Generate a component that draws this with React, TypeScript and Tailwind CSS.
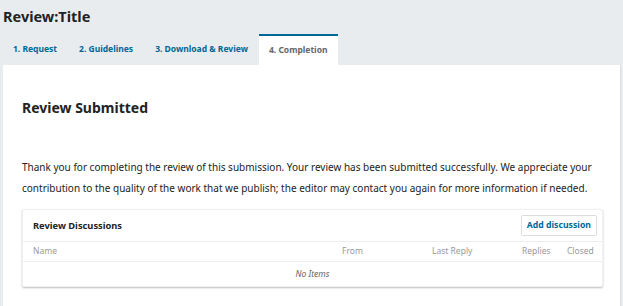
import React from "react";

export default function App() {
  const font = { fontFamily: '"Noto Sans", "Open Sans", sans-serif' };
  return (
    <div className="w-[623px] h-[306px] bg-[#e9ecee] overflow-hidden text-[#222]" style={font}>
      <div className="h-[34px] pl-[3px] pt-[5px]">
        <h1 className="text-[14.5px] leading-[22px] font-bold">Review:Title</h1>
      </div>
      <div className="flex h-[31px] pl-[2px] text-[8.5px] font-bold">
        <div className="px-[11px] flex items-center text-[#006798]">1. Request</div>
        <div className="px-[11px] flex items-center text-[#006798]">2. Guidelines</div>
        <div className="px-[11px] flex items-center text-[#006798]">3. Download &amp; Review</div>
        <div className="px-[10px] flex items-center bg-white border-t-2 border-[#006798] text-[#666]">4. Completion</div>
      </div>
      <div className="ml-[3px] w-[618px] h-[241px] bg-white border-r border-[#dcdfe2] pl-[19px] pr-[17px]">
        <h2 className="pt-[32px] text-[14px] leading-[22px] font-bold">Review Submitted</h2>
        <p className="mt-[38px] text-[10px] leading-[21px] text-[#222]">
          Thank you for completing the review of this submission. Your review has been submitted successfully. We appreciate your contribution to the quality of the work that we publish; the editor may contact you again for more information if needed.
        </p>
        <div className="mt-[10px] w-[581px] rounded-[2px] bg-white shadow-[0_1px_2px_rgba(0,0,0,0.25)] border border-[#f0f0f0]">
          <div className="flex items-center justify-between h-[32px] pl-[10px] pr-[5px] border-b border-[#eee]">
            <div className="text-[9.3px] font-bold text-[#222]">Review Discussions</div>
            <button className="h-[21px] px-[5px] border border-[#ddd] rounded-[2px] text-[8.7px] font-bold text-[#006798] bg-white">
              Add discussion
            </button>
          </div>
          <div className="flex items-center h-[20px] border-b border-[#eee] text-[8.5px] text-[#999]">
            <div className="pl-[10px] flex-1">Name</div>
            <div className="w-[90px]">From</div>
            <div className="w-[90px]">Last Reply</div>
            <div className="w-[45px]">Replies</div>
            <div className="w-[35px]">Closed</div>
          </div>
          <div className="h-[24px] flex items-center justify-center text-[8.5px] italic text-[#666]">No Items</div>
        </div>
      </div>
    </div>
  );
}
